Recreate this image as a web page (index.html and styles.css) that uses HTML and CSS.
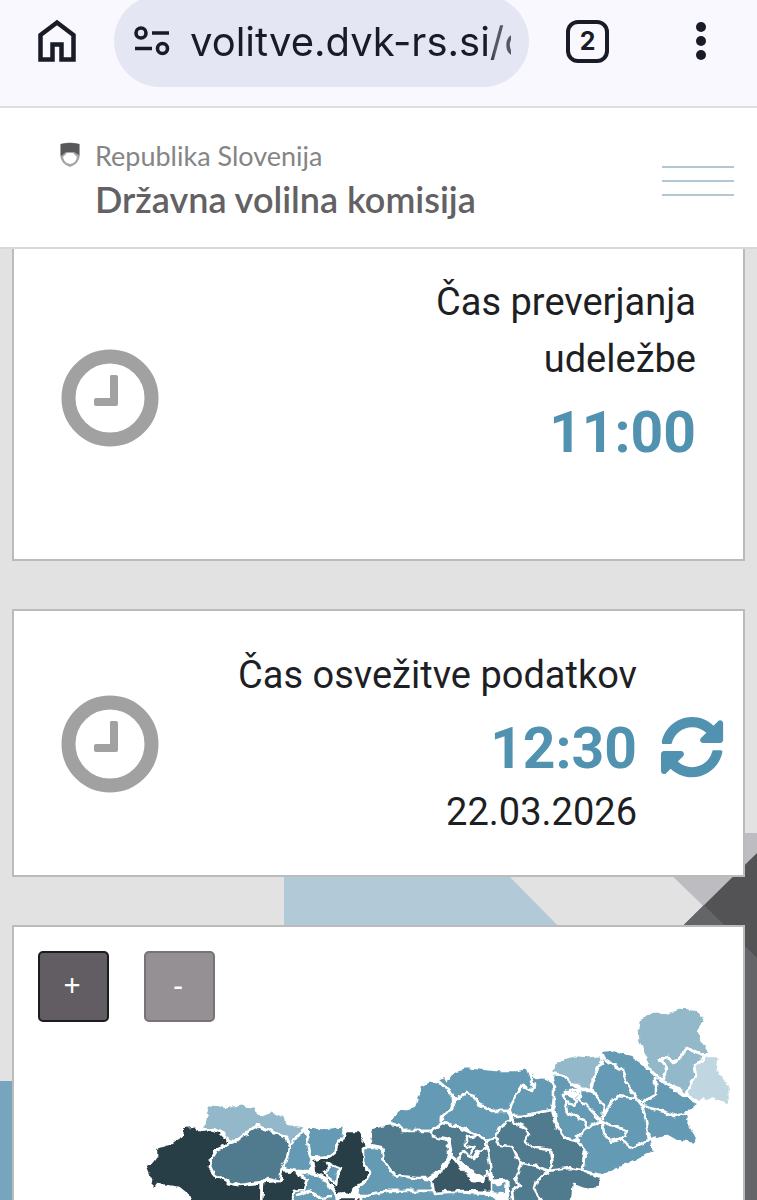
FILE: index.html
```
<!DOCTYPE html>
<html lang="sl">
<head>
    <meta charset="UTF-8">
    <meta name="viewport" content="width=device-width, initial-scale=1.0">
    <title>Državna volilna komisija</title>
    <link rel="stylesheet" href="styles.css">
</head>
<body>

<div class="browser-bar">
    <button type="button" class="icon-button" aria-label="Domov">
        <svg width="40" height="44" viewBox="0 0 40 44"><path d="M3.500 16 20 3.500 36.500 16V40.500H24.500V25.500H15.500V40.500H3.500Z" fill="none" stroke="#191b26" stroke-width="4.500"/></svg>
    </button>
    <div class="address">
        <svg width="36" height="30" viewBox="0 0 36 30" fill="none" stroke="#191b26" stroke-width="3.600"><circle cx="7" cy="7" r="5"/><path d="M18 7H35M1 22.500H18"/><circle cx="28.500" cy="22.500" r="5"/></svg>
        <input type="text" class="url" value="volitve.dvk-rs.si/domov" aria-label="Naslov">
    </div>
    <button type="button" class="tabs">2</button>
    <button type="button" class="icon-button" aria-label="Meni brskalnika">
        <svg width="12" height="40" viewBox="0 0 12 40" fill="#191b26"><circle cx="6" cy="6" r="5"/><circle cx="6" cy="20" r="5"/><circle cx="6" cy="34" r="5"/></svg>
    </button>
</div>

<header class="site-header">
    <a href="#" class="logo">
        <svg class="grb" width="20" height="26" viewBox="0 0 20 26">
            <path d="M0 2Q10-1 20 2V13Q19 22 10 25 1 22 0 13Z" fill="#a5a5a5"/>
            <path d="M1 2Q10 0 19 2V13L14 10H6L1 14Z" fill="#58585a"/>
            <path d="M3 15 7 11H13L17 15Q16 21 10 22 4 21 3 15Z" fill="#fff"/>
        </svg>
        <span class="logo-text">
            <span class="logo-small">Republika Slovenija</span>
            <span class="logo-big">Državna volilna komisija</span>
        </span>
    </a>
    <button type="button" class="menu" aria-label="Meni"><span></span><span></span><span></span></button>
</header>

<main>
    <!-- ozadje -->
    <svg class="backdrop" viewBox="0 248 757 952" preserveAspectRatio="xMaxYMin slice" aria-hidden="true">
        <path d="M284 800H435L637 1005H284Z" fill="#b2c9d7"/>
        <path d="M628 832H757V957Z" fill="#bcbcc1"/>
        <path d="M630 977 757 852V1200H630Z" fill="#535355"/>
        <path d="M630 977 704 904 757 957V1200H630Z" fill="#646568"/>
        <path d="M0 1080H40V1200H0Z" fill="#76a5bd"/>
    </svg>

    <section class="card card-check">
        <svg class="clock" viewBox="0 0 98 98"><circle cx="49" cy="49" r="41.500" fill="none" stroke="#a1a1a1" stroke-width="14"/><path d="M50 26h5q2 0 2 2v27q0 2-2 2H35q-2 0-2-2v-4q0-2 2-2h14V28q0-2 1-2Z" fill="#a1a1a1"/></svg>
        <div class="card-text">
            <p class="label">Čas preverjanja udeležbe</p>
            <p class="time">11:00</p>
        </div>
    </section>

    <section class="card card-refresh">
        <svg class="clock" viewBox="0 0 98 98"><circle cx="49" cy="49" r="41.500" fill="none" stroke="#a1a1a1" stroke-width="14"/><path d="M50 26h5q2 0 2 2v27q0 2-2 2H35q-2 0-2-2v-4q0-2 2-2h14V28q0-2 1-2Z" fill="#a1a1a1"/></svg>
        <div class="card-text">
            <p class="label">Čas osvežitve podatkov</p>
            <p class="time">12:30</p>
            <p class="label">22.03.2026</p>
        </div>
        <button type="button" class="refresh" aria-label="Osveži">
            <svg width="64" height="64" viewBox="0 0 512 512" fill="#5092b0"><path d="M371 142C340 113 300 97 257 97c-77 0-144 53-162 126-1 5-6 9-12 9H26c-8 0-13-7-12-14C35 103 136 16 257 16c66 0 126 26 171 69l36-36c15-15 41-5 41 17v134c0 13-11 24-24 24H345c-21 0-32-26-17-41ZM32 288h136c21 0 32 26 17 41l-43 43c31 29 71 45 114 45 77 0 144-53 162-126 1-5 6-9 12-9h57c8 0 13 7 12 14-21 114-122 202-243 202-66 0-126-26-171-69l-36 36c-15 15-41 5-41-17V312c0-13 11-24 24-24Z"/></svg>
        </button>
    </section>

    <section class="card card-map">
        <div class="zoom">
            <button type="button">+</button>
            <button type="button" disabled>-</button>
        </div>
        <svg class="map" viewBox="15 929 729 400" role="img" aria-label="Zemljevid okrajev">
            <defs>
                <!-- razgibane meje -->
                <filter id="rough" x="0" y="0" width="100%" height="100%" color-interpolation-filters="sRGB">
                    <feTurbulence type="fractalNoise" baseFrequency="0.14" numOctaves="2" seed="4"/>
                    <feDisplacementMap in="SourceGraphic" scale="6" xChannelSelector="R" yChannelSelector="G"/>
                </filter>
            </defs>
            <g filter="url(#rough)" stroke="#fff" stroke-width="2.600" stroke-linejoin="round">
                <g fill="#273e47">
                    <path d="M145 1167 152 1165 157 1158 157 1150 172 1145 183 1137 184 1129 199 1127 202 1133 212 1131 222 1134 228 1140 230 1146 218 1152 212 1162 211 1168 215 1177 230 1185 240 1187 263 1184 262 1210H195L190 1198 180 1190 168 1188 157 1187 155 1191 152 1188 153 1183 149 1177Z"/>
                    <path d="M263 1184 281 1183 283 1172 297 1173 300 1178 308 1180 305 1192 295 1193 293 1210H262Z"/>
                    <path d="M347 1133 361 1133 363 1140 367 1145 368 1149 365 1150 367 1160 365 1165 370 1173 368 1182 358 1188 353 1195 338 1197 328 1182 315 1175 313 1162 332 1158 338 1150 344 1138Z"/>
                    <path d="M340 1199H362V1210H340Z"/>
                </g>
                <g fill="#92b8c9">
                    <path d="M209 1106 220 1107 228 1109 243 1105 255 1111 263 1117 273 1113 285 1118 290 1126 305 1128 303 1133 297 1143 290 1147 287 1140 270 1132 257 1128 250 1133 240 1141 230 1146 228 1140 222 1134 212 1131 202 1133 206 1123 207 1115Z"/>
                    <path d="M638 1022 657 1013 665 1015 685 1009 697 1012 706 1020 700 1033 703 1043 711 1053 705 1057 687 1050 681 1062 673 1064 669 1059 662 1061 668 1072 663 1083 648 1070 647 1060 639 1043Z"/>
                    <path d="M705 1057 703 1063 695 1067 697 1078 690 1088 688 1097 664 1083 668 1072 662 1061 669 1059 673 1064 681 1062 687 1050Z"/>
                    <path d="M555 1066 565 1060 577 1057 590 1058 602 1057 603 1063 595 1077 592 1092 582 1092 572 1085 563 1077 554 1075Z"/>
                </g>
                <path fill="#c0d6e0" d="M708 1058 721 1058 719 1072 731 1088 731 1108 712 1100 700 1105 688 1097 690 1088 697 1078 695 1067 703 1063Z"/>
                <g fill="#649ab3">
                    <path d="M305 1132 310 1142 309 1150 313 1160 310 1173 297 1173 285 1170 283 1165 288 1155 290 1147 297 1140Z"/>
                    <path d="M309 1129 323 1131 345 1127 344 1138 338 1148 338 1153 332 1158 312 1160 309 1150 308 1140Z"/>
                    <path d="M325 1174 330 1171 328 1165 335 1168 342 1170 338 1177 337 1187 332 1182Z"/>
                    <path d="M298 1175 320 1177 328 1185 337 1197 340 1210H293L295 1193 305 1192 308 1182Z"/>
                    <path d="M298 1197 310 1193 320 1200 333 1199"/>
                    <path d="M365 1149 383 1149 385 1163 395 1177 417 1180 433 1183 433 1193 417 1193 387 1193 370 1197 357 1197 358 1190 369 1182 370 1173 365 1165Z"/>
                    <path d="M362 1199 387 1193 433 1193 492 1196 508 1210H362Z"/>
                    <path d="M432 1082 440 1085 453 1095 453 1110 443 1120 443 1127 432 1133 417 1133 403 1133 400 1127 390 1125 397 1113 415 1108 418 1100 422 1088Z"/>
                    <path d="M437 1081 445 1077 447 1083 455 1072 467 1069 497 1072 517 1072 528 1070 533 1077 535 1087 533 1093 523 1088 513 1105 510 1113 493 1113 478 1105 475 1097 467 1095 457 1102 453 1095Z"/>
                    <path d="M457 1102 467 1095 475 1097 478 1105 493 1113 510 1113 512 1122 500 1130 497 1140 487 1142 477 1137 457 1128 443 1125 443 1120 453 1110Z"/>
                    <path d="M528 1070 537 1080 543 1078 552 1082 556 1093 553 1112 538 1115 523 1118 512 1118 510 1113 513 1105 523 1088 533 1093 535 1087Z"/>
                    <path d="M602 1053 615 1051 633 1058 647 1068 663 1083 700 1107 688 1115 692 1130 698 1140 697 1145 677 1143 668 1138 652 1142 654 1153 643 1160 615 1173 602 1177 583 1173 586 1153 578 1143 565 1140 558 1130 555 1110 555 1090 552 1076 563 1077 572 1085 582 1092 592 1092 595 1077 603 1063Z"/>
                </g>
                <g fill="#507b8e">
                    <path d="M230 1146 240 1141 250 1133 257 1128 270 1132 287 1140 290 1150 288 1160 283 1170 281 1183 268 1180 263 1184 240 1187 230 1185 215 1177 211 1168 212 1162 218 1152Z"/>
                    <path d="M373 1130 390 1126 400 1127 403 1133 432 1133 432 1138 450 1142 450 1158 442 1172 430 1180 417 1180 395 1177 385 1163 383 1150 370 1148Z"/>
                    <path d="M432 1133 443 1125 457 1128 477 1137 487 1142 497 1140 500 1130 512 1122 512 1118 523 1118 538 1115 553 1112 558 1130 565 1140 578 1143 586 1153 583 1173 602 1179 601 1189 590 1191 575 1187 572 1210H510L508 1182 487 1183 453 1158 450 1142 432 1138Z"/>
                </g>
                <path fill="#3a5866" d="M453 1158 460 1167 473 1182 485 1183 487 1173 492 1177 492 1194 463 1193 435 1195 433 1183 442 1173Z"/>
                <path fill="#649ab3" d="M493 1183 499 1187 508 1182 507 1197 493 1195Z"/>
                <g fill="none">
                    <path d="M487 1142 488 1150 490 1160 493 1183M453 1158 460 1165 461 1155 465 1153 470 1158 475 1162 480 1153 487 1150"/>
                    <path d="M477 1138 467 1140 467 1148 475 1150 472 1157M497 1140 500 1147 513 1148 517 1157 522 1165 537 1168 550 1173 570 1170 583 1172"/>
                    <path d="M512 1118 515 1125 527 1130 530 1137 525 1143 537 1150 552 1152 554 1167 550 1173 537 1183 535 1190 542 1202M522 1165 517 1178 520 1188 513 1193 514 1202"/>
                    <path d="M603 1055 607 1063 623 1072 628 1085 637 1100 643 1108 647 1123 650 1142 633 1150 622 1142 628 1133 602 1123"/>
                    <path d="M592 1092 605 1107 603 1120 610 1108 618 1098 637 1100M657 1080 657 1097 645 1103 643 1108 660 1112 677 1118 688 1115"/>
                    <path d="M602 1123 605 1135 612 1143 622 1140M573 1093 590 1110 602 1123 588 1130 578 1138 579 1143M582 1092 577 1094M565 1097 568 1115 585 1122 588 1130"/>
                    <path d="M570 1087H580V1092H571V1098H581V1089M566 1092 578 1102 575 1107 567 1105 564 1096 579 1096"/>
                    <path d="M663 1083 680 1092 703 1108" stroke-width="3"/>
                </g>
            </g>
        </svg>
    </section>
</main>

</body>
</html>
```

FILE: styles.css
```
* {
    box-sizing: border-box;
}

body {
    margin: 0;
    height: 100vh;
    display: flex;
    flex-direction: column;
    overflow: hidden;
    font-family: Roboto, "Liberation Sans", sans-serif;
    background-color: #e2e2e2;
    color: #1e1f24;
}

button {
    padding: 0;
    border: none;
    background: none;
    font-family: inherit;
    cursor: pointer;
}

svg {
    display: block;
    flex-shrink: 0;
}

/* Browser bar */
.browser-bar {
    display: flex;
    align-items: center;
    height: 108px;
    padding: 0 50px 24px 37px;
    background-color: #f9f8fe;
    border-bottom: 2px solid #dededf;
    flex-shrink: 0;
}

.address {
    flex: 1;
    min-width: 0;
    height: 92px;
    margin: 0 37px;
    padding: 0 18px 0 20px;
    display: flex;
    align-items: center;
    gap: 20px;
    border-radius: 46px;
    background-color: #e4e6f3;
}

.url {
    flex: 1;
    min-width: 0;
    height: 60px;
    padding: 0;
    border: none;
    outline: none;
    background: none;
    font-family: Inter, Roboto, sans-serif;
    font-size: 40px;
    color: #191b26;
    -webkit-mask-image: linear-gradient(to right, #000 93%, rgba(0, 0, 0, 0.7) 95%);
}

.tabs {
    width: 43px;
    height: 43px;
    margin-right: 86px;
    border: 4px solid #191b26;
    border-radius: 12px;
    font-family: Inter, sans-serif;
    font-size: 25px;
    font-weight: 700;
    line-height: 34px;
    color: #191b26;
}

/* Header */
.site-header {
    display: flex;
    justify-content: space-between;
    align-items: center;
    height: 141px;
    padding: 6px 23px 0 60px;
    background-color: #fff;
    border-bottom: 2px solid #d8d8d8;
    flex-shrink: 0;
}

.logo {
    display: flex;
    gap: 15px;
    text-decoration: none;
}

.grb {
    margin-top: 4px;
}

.logo-text {
    display: flex;
    flex-direction: column;
    font-family: Lato, "Open Sans", sans-serif;
}

.logo-small {
    font-size: 27px;
    line-height: 36px;
    color: #858585;
}

.logo-big {
    font-size: 36px;
    line-height: 50px;
    font-weight: 600;
    color: #636163;
}

.menu {
    width: 72px;
    display: flex;
    flex-direction: column;
    gap: 12px;
}

.menu span {
    height: 2px;
    background-color: #b1c7d3;
}

/* Cards */
main {
    position: relative;
    flex: 1;
    min-height: 0;
    display: flex;
    flex-direction: column;
    gap: 48px;
    padding: 0 12px;
    overflow: hidden;
}

.backdrop {
    position: absolute;
    top: 0;
    left: 0;
    width: 100%;
    height: 100%;
}

.card {
    position: relative;
    flex-shrink: 0;
    display: flex;
    align-items: center;
    background-color: #fff;
    border: 2px solid #bbb;
}

.card-check {
    border-top: none;
    padding: 25px 47px 91px 47px;
}

.card-refresh {
    padding: 36px 19px 34px 47px;
}

.card-check .clock {
    margin-top: 54px;
}

.clock {
    width: 98px;
    height: 98px;
}

.card-text {
    flex: 1;
    padding-left: 60px;
    text-align: right;
}

.card-check .card-text {
    padding-left: 200px;
}

.label {
    margin: 0;
    font-size: 38px;
    line-height: 57px;
}

.time {
    margin: 0;
    padding-top: 10px;
    font-size: 57px;
    line-height: 70px;
    font-weight: 700;
    color: #5092b0;
}

.refresh {
    margin: 6px 0 0 23px;
}

/* Map */
.card-map {
    flex: 1 0 0;
    min-height: 0;
    display: block;
    border-bottom: none;
    overflow: hidden;
}

.zoom {
    position: absolute;
    top: 24px;
    left: 24px;
    display: flex;
    gap: 35px;
}

.zoom button {
    width: 71px;
    height: 71px;
    padding: 0 3px 4px 0;
    border: 2px solid #1c1b1d;
    border-radius: 5px;
    background-color: #625d62;
    color: #fff;
    font-family: "Noto Sans", sans-serif;
    font-size: 30px;
}

.zoom button:disabled {
    border-color: #777478;
    background-color: #949094;
}

.map {
    width: 100%;
}
```
